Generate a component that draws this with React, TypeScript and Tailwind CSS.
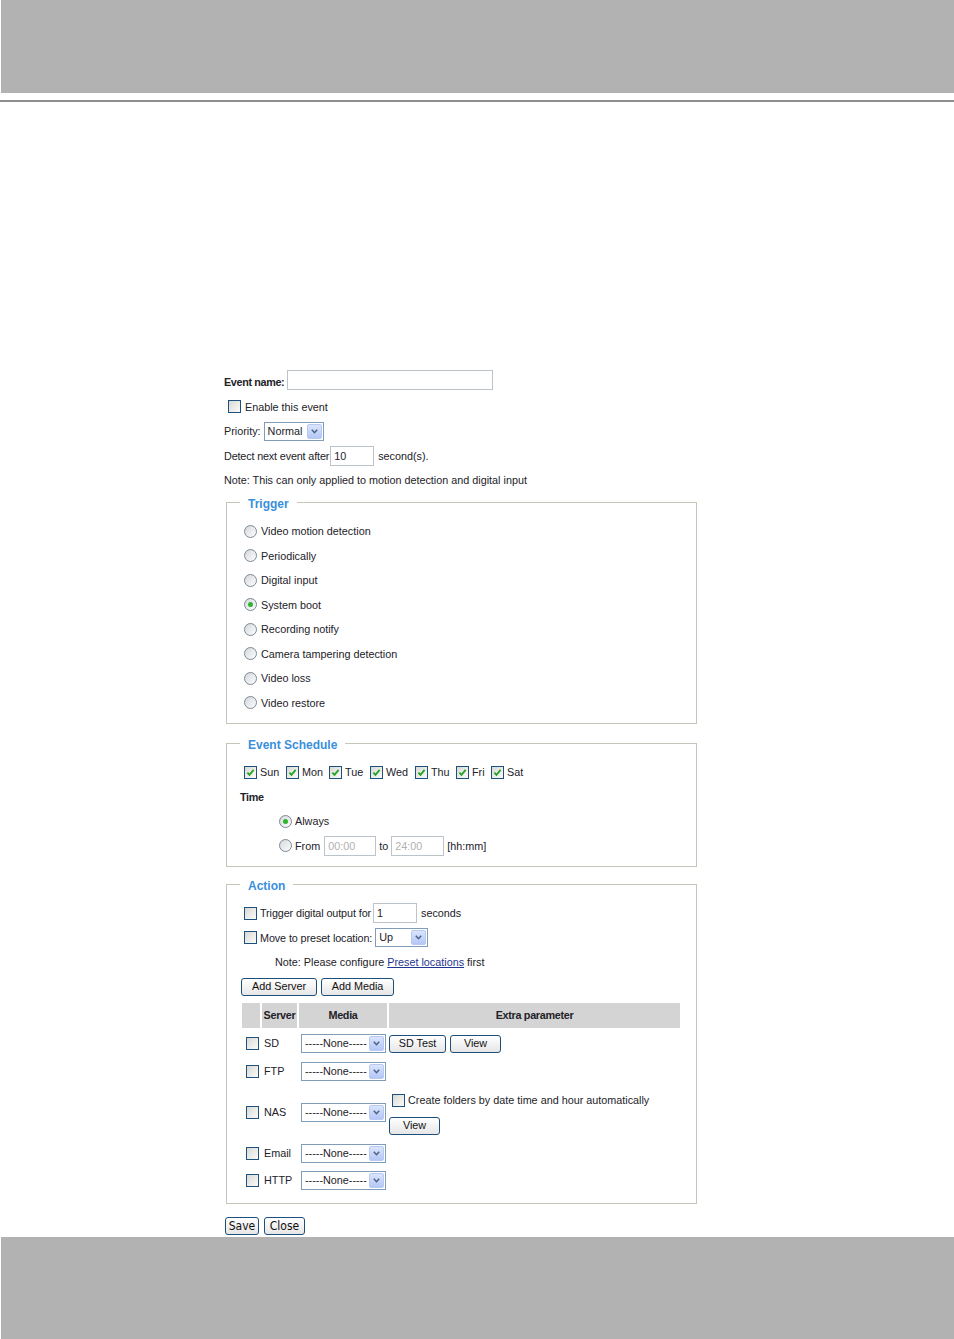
import React from 'react';

const Check = ({ checked = false }: { checked?: boolean }) => (
  <span className="inline-flex w-[13px] h-[13px] shrink-0 border border-[#1c5180] bg-linear-to-br from-[#d9d9d3] to-[#fbfbfa] items-center justify-center">
    {checked && (
      <svg width="9" height="9" viewBox="0 0 9 9">
        <path d="M1.4 4.6 L3.5 6.9 L7.6 1.9" stroke="#22a322" strokeWidth="1.7" fill="none" />
      </svg>
    )}
  </span>
);

const Radio = ({ checked = false }: { checked?: boolean }) => (
  <span className="inline-flex w-[13px] h-[13px] shrink-0 rounded-full border border-[#7b8896] bg-linear-to-br from-[#d5d8dc] to-[#fdfdfd] items-center justify-center">
    {checked && <span className="w-[5px] h-[5px] rounded-full bg-[#2db52d]" />}
  </span>
);

const Select = ({ w, text }: { w: string; text: string }) => (
  <span className={`inline-flex h-[19px] shrink-0 border border-[#7f9db9] bg-white items-center justify-between pl-[3px] pr-[1px] ${w}`}>
    <span className="leading-none whitespace-nowrap">{text}</span>
    <span className="w-[15px] h-[15px] rounded-[2px] border border-[#b8c9f3] bg-linear-to-b from-[#dae4fd] to-[#b4c7f5] flex items-center justify-center">
      <svg width="7" height="5" viewBox="0 0 7 5">
        <path d="M0.8 0.8 L3.5 3.7 L6.2 0.8" stroke="#4d6185" strokeWidth="1.5" fill="none" />
      </svg>
    </span>
  </span>
);

const Btn = ({ w, children, narrow = false }: { w: string; children: React.ReactNode; narrow?: boolean }) => (
  <button
    type="button"
    className={`inline-flex shrink-0 items-center justify-center h-[18px] border border-[#1c4f7c] rounded-[3px] bg-linear-to-b from-white to-[#e6e6e6] text-[#111] leading-none ${
      narrow ? "font-['Liberation_Sans_Narrow','DejaVu_Sans_Condensed',sans-serif] text-[12px]" : 'text-[10.8px]'
    } ${w}`}
  >
    {children}
  </button>
);

const Input = ({ w, value = '', disabled = false }: { w: string; value?: string; disabled?: boolean }) => (
  <span
    className={`inline-flex shrink-0 items-center h-[20px] border border-[#bcc3cb] bg-white pl-[3px] ${w} ${
      disabled ? 'text-[#b0b0b0]' : ''
    }`}
  >
    {value}
  </span>
);

const Row = ({ children, cls = '' }: { children: React.ReactNode; cls?: string }) => (
  <div className={`h-[24.5px] flex items-center ${cls}`}>{children}</div>
);

const Legend = ({ children }: { children: React.ReactNode }) => (
  <legend className="ml-[13px] px-[8px] text-[12px] leading-[14px] font-bold text-[#3a8fdc]">
    <span className="relative top-[1.5px]">{children}</span>
  </legend>
);

const triggers = [
  'Video motion detection',
  'Periodically',
  'Digital input',
  'System boot',
  'Recording notify',
  'Camera tampering detection',
  'Video loss',
  'Video restore',
];

const days: [string, string][] = [
  ['Sun', 'w-[42px]'],
  ['Mon', 'w-[43px]'],
  ['Tue', 'w-[41px]'],
  ['Wed', 'w-[45px]'],
  ['Thu', 'w-[41px]'],
  ['Fri', 'w-[35px]'],
  ['Sat', 'w-[40px]'],
];

export default function App() {
  return (
    <div className="w-[954px] h-[1339px] bg-white font-['Liberation_Sans',Arial,sans-serif] text-[10.8px] text-[#222228] overflow-hidden">
      <div className="h-[93px] ml-[1px] bg-[#b2b2b2]" />
      <div className="mt-[7px] h-[2px] bg-[#8e8e8e]" />

      <div className="pt-[268px] ml-[224px] w-[476px]">
        <Row>
          <span className="font-bold tracking-[-0.35px]">Event name:</span>
          <span className="ml-[3px]">
            <Input w="w-[206px]" />
          </span>
        </Row>
        <Row cls="pl-[4px]">
          <Check />
          <span className="ml-[4px]">Enable this event</span>
        </Row>
        <Row>
          <span>Priority:</span>
          <span className="ml-[3px] flex">
            <Select w="w-[60px]" text="Normal" />
          </span>
        </Row>
        <Row>
          <span className="tracking-[-0.15px]">Detect next event after</span>
          <span className="ml-[1px] flex">
            <Input w="w-[44px]" value="10" />
          </span>
          <span className="ml-[4px]">second(s).</span>
        </Row>
        <Row>
          <span>Note: This can only applied to motion detection and digital input</span>
        </Row>

        <fieldset className="mt-[2.5px] ml-[2px] w-[471px] border border-[#c7c4ba] pt-[10px] pb-[8px]">
          <Legend>Trigger</Legend>
          {triggers.map((t) => (
            <Row key={t} cls="pl-[17px]">
              <Radio checked={t === 'System boot'} />
              <span className="ml-[4px]">{t}</span>
            </Row>
          ))}
        </fieldset>

        <fieldset className="mt-[12px] ml-[2px] w-[471px] border border-[#c7c4ba] pt-[10px] pb-[8px]">
          <Legend>Event Schedule</Legend>
          <Row cls="pl-[17px]">
            {days.map(([d, w]) => (
              <span key={d} className={`flex items-center shrink-0 ${w}`}>
                <Check checked />
                <span className="ml-[3px]">{d}</span>
              </span>
            ))}
          </Row>
          <Row cls="pl-[13px]">
            <span className="font-bold tracking-[-0.3px]">Time</span>
          </Row>
          <Row cls="pl-[52px]">
            <Radio checked />
            <span className="ml-[3px]">Always</span>
          </Row>
          <Row cls="pl-[52px]">
            <Radio />
            <span className="ml-[3px]">From</span>
            <span className="ml-[4px] flex">
              <Input w="w-[52px]" value="00:00" disabled />
            </span>
            <span className="ml-[3px]">to</span>
            <span className="ml-[3px] flex">
              <Input w="w-[53px]" value="24:00" disabled />
            </span>
            <span className="ml-[3px]">[hh:mm]</span>
          </Row>
        </fieldset>

        <fieldset className="mt-[10px] ml-[2px] w-[471px] border border-[#c7c4ba] pt-[10px] pb-[8px]">
          <Legend>Action</Legend>
          <Row cls="pl-[17px]">
            <Check />
            <span className="ml-[3px] tracking-[-0.1px]">Trigger digital output for</span>
            <span className="ml-[2px] flex">
              <Input w="w-[44px]" value="1" />
            </span>
            <span className="ml-[4px]">seconds</span>
          </Row>
          <Row cls="pl-[17px]">
            <Check />
            <span className="ml-[3px] tracking-[-0.1px]">Move to preset location:</span>
            <span className="ml-[3px] flex">
              <Select w="w-[53px]" text="Up" />
            </span>
          </Row>
          <Row cls="pl-[48px]">
            <span>Note: Please configure&nbsp;</span>
            <a className="text-[#1f3590] underline">Preset locations</a>
            <span>&nbsp;first</span>
          </Row>
          <Row cls="pl-[14px]">
            <Btn w="w-[76px]">Add Server</Btn>
            <span className="ml-[4px] flex">
              <Btn w="w-[73px]">Add Media</Btn>
            </span>
          </Row>

          <div className="mt-[3.5px] ml-[15px] w-[439px]">
            <div className="grid grid-cols-[18px_35px_87px_292px] gap-x-[2px] h-[25px] font-bold tracking-[-0.3px]">
              <div className="bg-[#d4d4d4]" />
              <div className="bg-[#d4d4d4] flex items-center justify-center">Server</div>
              <div className="bg-[#d4d4d4] flex items-center justify-center mr-[-1px]">Media</div>
              <div className="bg-[#d4d4d4] flex items-center justify-center ml-[1px]">Extra parameter</div>
            </div>

            <div className="mt-[2px]">
              <div className="grid grid-cols-[18px_35px_87px_292px] gap-x-[2px] h-[28px] items-center">
                <div className="pl-[4px] flex"><Check /></div>
                <div className="pl-[2px]">SD</div>
                <div className="pl-[2px] flex"><Select w="w-[85px]" text="-----None-----" /></div>
                <div className="pl-[1px] flex">
                  <Btn w="w-[57px]">SD Test</Btn>
                  <span className="ml-[4px] flex"><Btn w="w-[51px]">View</Btn></span>
                </div>
              </div>
              <div className="grid grid-cols-[18px_35px_87px_292px] gap-x-[2px] h-[28px] items-center">
                <div className="pl-[4px] flex"><Check /></div>
                <div className="pl-[2px]">FTP</div>
                <div className="pl-[2px] flex"><Select w="w-[85px]" text="-----None-----" /></div>
                <div />
              </div>
              <div className="grid grid-cols-[18px_35px_87px_292px] gap-x-[2px] h-[54px] items-center">
                <div className="pl-[4px] flex"><Check /></div>
                <div className="pl-[2px]">NAS</div>
                <div className="pl-[2px] flex"><Select w="w-[85px]" text="-----None-----" /></div>
                <div className="self-start pt-[5px]">
                  <div className="h-[20px] flex items-center pl-[4px]">
                    <Check />
                    <span className="ml-[3px]">Create folders by date time and hour automatically</span>
                  </div>
                  <div className="mt-[6px] pl-[1px] flex">
                    <Btn w="w-[51px]">View</Btn>
                  </div>
                </div>
              </div>
              <div className="grid grid-cols-[18px_35px_87px_292px] gap-x-[2px] h-[27px] items-center">
                <div className="pl-[4px] flex"><Check /></div>
                <div className="pl-[2px]">Email</div>
                <div className="pl-[2px] flex"><Select w="w-[85px]" text="-----None-----" /></div>
                <div />
              </div>
              <div className="grid grid-cols-[18px_35px_87px_292px] gap-x-[2px] h-[28px] items-center">
                <div className="pl-[4px] flex"><Check /></div>
                <div className="pl-[2px]">HTTP</div>
                <div className="pl-[2px] flex"><Select w="w-[85px]" text="-----None-----" /></div>
                <div />
              </div>
            </div>
          </div>
        </fieldset>

        <div className="mt-[13px] h-[18px] ml-[1px] flex">
          <Btn w="w-[34px]" narrow>Save</Btn>
          <span className="ml-[5px] flex">
            <Btn w="w-[41px]" narrow>Close</Btn>
          </span>
        </div>
      </div>

      <div className="mt-[2px] h-[102px] ml-[1px] bg-[#b2b2b2]" />
    </div>
  );
}
